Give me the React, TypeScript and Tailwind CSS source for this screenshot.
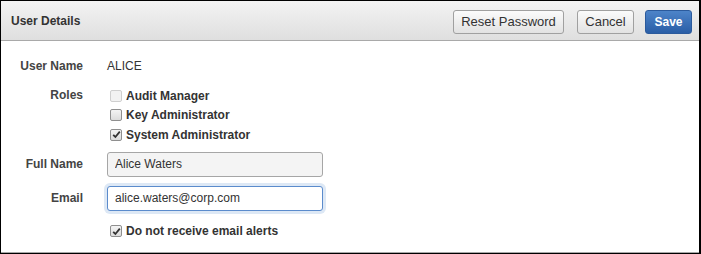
const roles = [
  { name: "Audit Manager", checked: false, disabled: true },
  { name: "Key Administrator", checked: false, disabled: false },
  { name: "System Administrator", checked: true, disabled: false },
];

const Check = ({ checked, disabled }: { checked: boolean; disabled?: boolean }) => (
  <span
    className={`flex h-[12px] w-[12px] items-center justify-center rounded-[2px] border ${
      disabled ? "border-[#cfcfcf] bg-[#f2f2f2]" : "border-[#8f8f8f] bg-gradient-to-b from-[#f4f4f4] to-[#dcdcdc]"
    }`}
  >
    {checked && (
      <svg width="9" height="9" viewBox="0 0 9 9">
        <path d="M1.2 4.8 L3.4 7 L7.8 1.6" fill="none" stroke="#333" strokeWidth="1.8" />
      </svg>
    )}
  </span>
);

const App = () => {
  return (
    <div
      className="w-[701px] h-[254px] border-l border-t border-b border-r-2 border-black bg-white text-[12px] text-[#333]"
      style={{ fontFamily: '"Liberation Sans", Arial, sans-serif' }}
    >
      <div className="flex h-full flex-col border-b border-[#a8a8a8]">
        {/* HEADER */}
        <div className="flex h-[40px] shrink-0 items-center justify-between border-b border-[#a9a9a9] bg-gradient-to-b from-[#f3f3f3] to-[#dfdfdf] pl-[10px] pr-[7px]">
          <h1 className="pt-[1px] font-bold text-[#333]">User Details</h1>
          <div className="flex items-center pt-[2px]">
            <button className="h-[24px] w-[111px] rounded-[3px] border border-[#a0a0a0] bg-gradient-to-b from-[#fbfbfb] to-[#e2e2e2] text-[13px] text-[#333]">
              Reset Password
            </button>
            <button className="ml-[13px] h-[24px] w-[57px] rounded-[3px] border border-[#a0a0a0] bg-gradient-to-b from-[#fbfbfb] to-[#e2e2e2] text-[13px] text-[#333]">
              Cancel
            </button>
            <button className="ml-[11px] h-[24px] w-[47px] rounded-[3px] border border-[#2b5a9c] bg-gradient-to-b from-[#4d84c9] to-[#2a5ea6] text-[12px] font-bold text-white">
              Save
            </button>
          </div>
        </div>

        {/* BODY */}
        <div className="grid grid-cols-[82px_1fr] gap-x-[24px] pt-[17px]">
          <div className="text-right font-bold leading-[16px] text-[#444]">User Name</div>
          <div className="leading-[16px]">ALICE</div>

          <div className="mt-[12px] pt-[1px] text-right font-bold leading-[16px] text-[#444]">Roles</div>
          <div className="mt-[12px] flex flex-col pl-[3px]">
            {roles.map((r) => (
              <label key={r.name} className="flex h-[19.5px] items-center gap-[4px] font-bold">
                <Check checked={r.checked} disabled={r.disabled} />
                <span>{r.name}</span>
              </label>
            ))}
          </div>

          <div className="mt-[7px] flex h-[25px] items-center justify-end font-bold text-[#444]">Full Name</div>
          <div className="mt-[7px]">
            <input
              readOnly
              value="Alice Waters"
              className="h-[25px] w-[216px] rounded-[3px] border border-[#a6a6a6] bg-[#f4f4f4] px-[7px] text-[12px] text-[#333] outline-none"
              style={{ fontFamily: '"Liberation Sans", Arial, sans-serif' }}
            />
          </div>

          <div className="mt-[9px] flex h-[25px] items-center justify-end font-bold text-[#444]">Email</div>
          <div className="mt-[9px]">
            <input
              readOnly
              value="alice.waters@corp.com"
              className="h-[25px] w-[216px] rounded-[3px] border border-[#5b8bcc] bg-white px-[7px] text-[12px] text-[#333] shadow-[0_0_0_3px_#dde8f5] outline-none"
              style={{ fontFamily: '"Liberation Sans", Arial, sans-serif' }}
            />
          </div>

          <div />
          <label className="mt-[10px] flex h-[21px] items-center gap-[4px] pl-[3px] font-bold">
            <Check checked />
            <span>Do not receive email alerts</span>
          </label>
        </div>
      </div>
    </div>
  );
};

export default App;
